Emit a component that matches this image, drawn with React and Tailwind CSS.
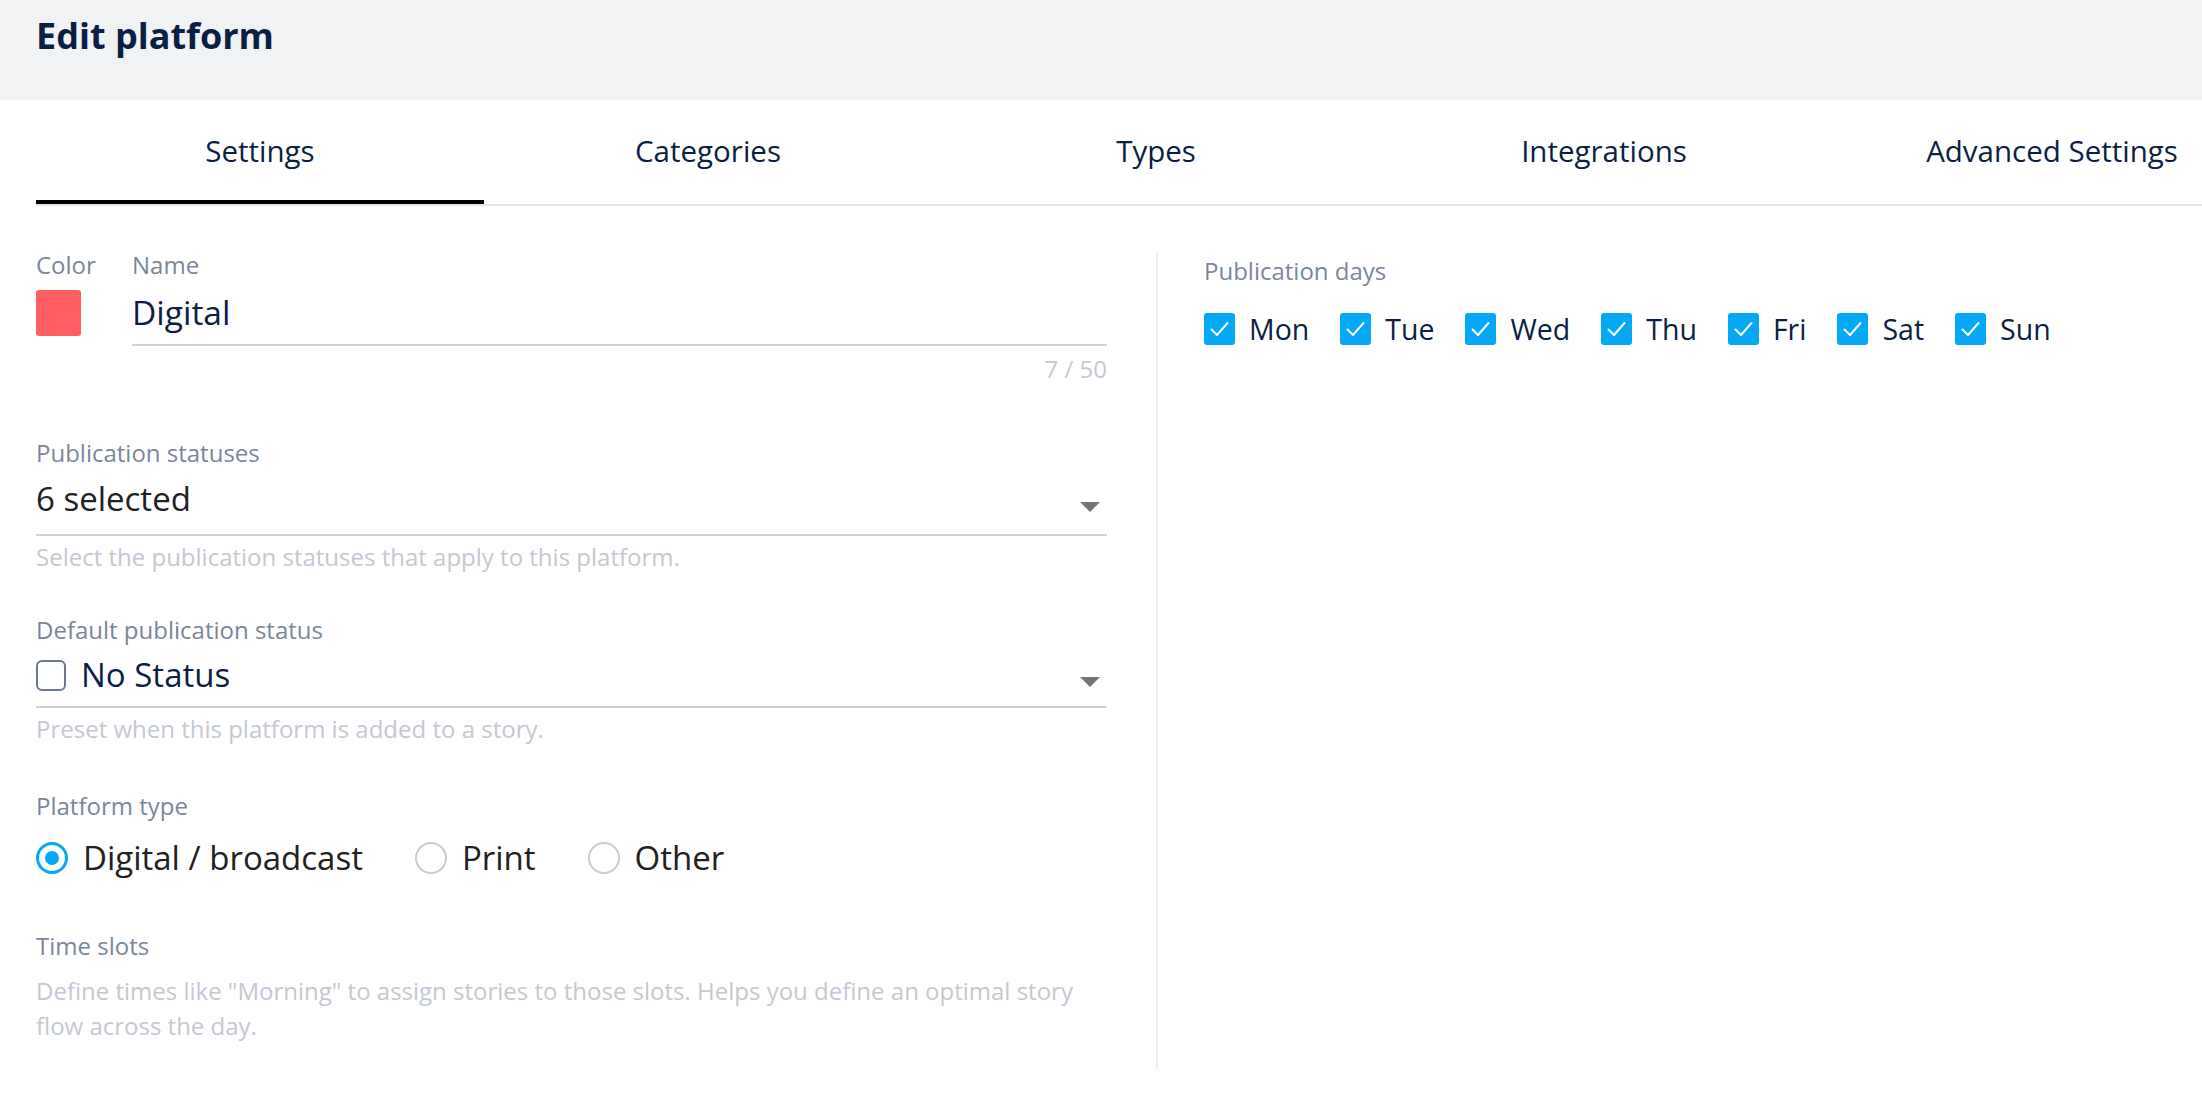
import React from "react";

const Arrow = ({ className }) => (
  <svg className={className} width="20" height="10" viewBox="0 0 20 10">
    <path d="M0 0 L20 0 L10 10 Z" fill="#757575" />
  </svg>
);

const Check = () => (
  <svg width="31" height="32" viewBox="0 0 31 32" className="block">
    <path d="M7.5 16.5 L13 22 L23.5 10" fill="none" stroke="white" strokeWidth="2" strokeLinecap="round" strokeLinejoin="round" />
  </svg>
);

const Radio = ({ on }) =>
  on ? (
    <div className="w-[32px] h-[32px] rounded-full border-[3px] border-[#03a9f4] flex items-center justify-center">
      <div className="w-[14px] h-[14px] rounded-full bg-[#03a9f4]" />
    </div>
  ) : (
    <div className="w-[32px] h-[32px] rounded-full border-2 border-[#c5cad3]" />
  );

export default function App() {
  const tabs = ["Settings", "Categories", "Types", "Integrations", "Advanced Settings"];
  const days = ["Mon", "Tue", "Wed", "Thu", "Fri", "Sat", "Sun"];
  const label = "text-[24px] leading-[32px] text-[#7a869b]";
  const helper = "text-[24px] leading-[32px] text-[#c3c8d3]";
  return (
    <div className="w-[2202px] h-[1120px] overflow-hidden bg-white font-['Open_Sans',sans-serif]">
      <div className="h-[100px] bg-[#f1f2f4] pl-[36px] pt-[12px]">
        <h1 className="text-[36px] leading-[48px] font-bold text-[#0b1f44]">Edit platform</h1>
      </div>
      <div className="pl-[36px]">
        <div className="w-[2240px]">
          <div className="flex border-b-2 border-[#e3e5e8]">
            {tabs.map((t, i) => (
              <div
                key={t}
                className={
                  "w-[448px] shrink-0 h-[104px] flex items-center justify-center pt-[2px] border-b-4 text-[29.5px] text-[#0b1f44] " +
                  (i === 0 ? "border-black" : "border-transparent")
                }
              >
                {t}
              </div>
            ))}
          </div>

          <div className="grid grid-cols-2 mt-[43px]">
            <div className="pr-[49px] h-[821px]">
              <div className="flex">
                <div className="w-[96px]">
                  <div className={label}>Color</div>
                  <div className="mt-[9px] w-[45px] h-[46px] rounded-[3px] bg-[#ff5f63]" />
                </div>
                <div className="flex-1">
                  <div className={label}>Name</div>
                  <div className="mt-[6px] h-[59px] pt-[3px] border-b-2 border-[#cdd2dc] text-[33.5px] leading-[44px] text-[#0b1f44]">
                    Digital
                  </div>
                  <div className={"mt-[7px] text-right " + helper}>7 / 50</div>
                </div>
              </div>

              <div className={"mt-[52px] " + label}>Publication statuses</div>
              <div className="mt-[5px] h-[62px] pt-[3px] border-b-2 border-[#cdd2dc] flex justify-between">
                <div className="text-[33px] leading-[44px] text-[#212121]">6 selected</div>
                <Arrow className="mt-[25px] mr-[7px]" />
              </div>
              <div className={"mt-[5px] " + helper}>
                Select the publication statuses that apply to this platform.
              </div>

              <div className={"mt-[41px] " + label}>Default publication status</div>
              <div className="mt-[4px] h-[58px] pt-[3px] border-b-2 border-[#cdd2dc] flex justify-between">
                <div className="h-[44px] flex items-center gap-[15px]">
                  <div className="w-[30px] h-[31px] rounded-[6px] border-2 border-[#6b7891]" />
                  <div className="text-[33px] leading-[44px] text-[#0b1f44]">No Status</div>
                </div>
                <Arrow className="mt-[24px] mr-[7px]" />
              </div>
              <div className={"mt-[5px] " + helper}>Preset when this platform is added to a story.</div>

              <div className={"mt-[45px] " + label}>Platform type</div>
              <div className="mt-[14px] h-[44px] flex items-center gap-[52px]">
                {[
                  ["Digital / broadcast", true],
                  ["Print", false],
                  ["Other", false],
                ].map(([t, on]) => (
                  <div key={t} className="flex items-center gap-[15px]">
                    <Radio on={on} />
                    <span className="text-[33px] leading-[44px] text-[#212121]">{t}</span>
                  </div>
                ))}
              </div>

              <div className={"mt-[50px] " + label}>Time slots</div>
              <div className="mt-[11px] text-[24px] leading-[35px] text-[#c3c8d3]">
                Define times like "Morning" to assign stories to those slots. Helps you define an optimal story flow across the day.
              </div>
            </div>

            <div className="mt-[4px] h-[817px] border-l-2 border-[#eef0f3] pl-[46px] pt-[2px]">
              <div className={label}>Publication days</div>
              <div className="mt-[20px] h-[44px] flex items-center gap-[31px]">
                {days.map((d) => (
                  <div key={d} className="flex items-center gap-[14px]">
                    <div className="w-[31px] h-[32px] rounded-[3px] bg-[#03a9f4]">
                      <Check />
                    </div>
                    <span className="text-[28.5px] leading-[44px] text-[#0b1f44]">{d}</span>
                  </div>
                ))}
              </div>
            </div>
          </div>
        </div>
      </div>
    </div>
  );
}
